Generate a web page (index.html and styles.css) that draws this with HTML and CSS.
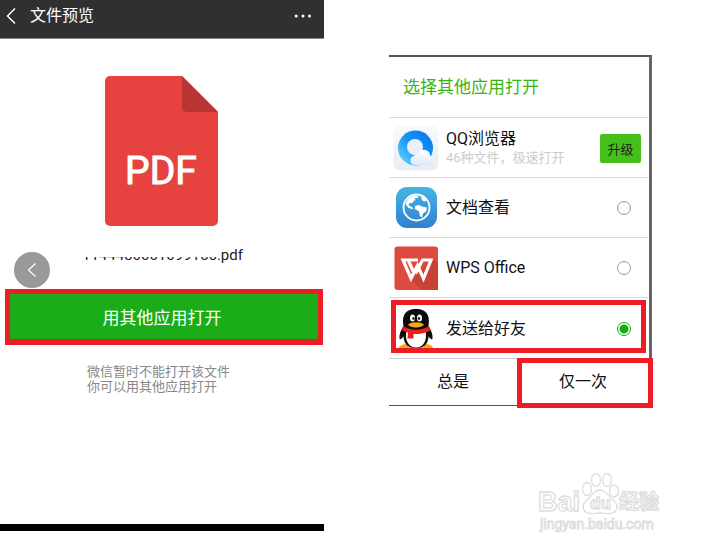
FILE: index.html
```
<!DOCTYPE html>
<html lang="zh-CN">
<head>
<meta charset="utf-8">
<title>文件预览</title>
<link rel="stylesheet" href="styles.css">
</head>
<body>
<main class="page">
  <section class="phone">
    <header class="bar">
      <button class="icon-btn" type="button" aria-label="返回">
        <svg width="10" height="18" viewBox="0 0 10 18" fill="none" stroke="#fff" stroke-width="1.500"><path d="M9 1.500 1.500 9 9 16.500"/></svg>
      </button>
      <h1 class="bar-title">文件预览</h1>
      <button class="icon-btn" type="button" aria-label="更多">
        <svg width="18" height="4" viewBox="0 0 18 4" fill="#fff"><circle cx="2.200" cy="2" r="1.500"/><circle cx="9" cy="2" r="1.500"/><circle cx="15.500" cy="2" r="1.500"/></svg>
      </button>
    </header>
    <svg class="pdf" width="114" height="150" viewBox="0 0 114 150" role="img" aria-label="PDF">
      <path fill="#e64340" d="M5 0H77L113 36V145a5 5 0 0 1-5 5H5a5 5 0 0 1-5-5V5a5 5 0 0 1 5-5z"/>
      <path fill="#b83533" d="M77 0V31a5 5 0 0 0 5 5H113z"/>
      <text class="pdf-text" x="56" y="108" text-anchor="middle">PDF</text>
    </svg>
    <div class="name-row">
      <button class="float-back" type="button" aria-label="后退">
        <svg width="10" height="16" viewBox="0 0 10 16" fill="none" stroke="#fff" stroke-width="1.200"><path d="M8.500 1.500 1.500 8l7 6.500"/></svg>
      </button>
      <p class="file-name"><span class="digits">1144430001099156</span>.pdf</p>
    </div>
    <div class="marked">
      <button class="open-btn" type="button">用其他应用打开</button>
    </div>
    <p class="hint">微信暂时不能打开该文件<br>你可以用其他应用打开</p>
    <div class="nav-strip"></div>
  </section>

  <section class="side">
    <form class="dialog">
      <div class="sheet">
        <h2 class="sheet-title">选择其他应用打开</h2>
        <div class="row">
          <svg class="app" width="46" height="46" viewBox="0 0 46 46" aria-hidden="true">
            <defs>
              <linearGradient id="tile" x2="0" y2="1"><stop stop-color="#f7fafd"/><stop offset="1" stop-color="#e7edf4"/></linearGradient>
              <linearGradient id="ring" x1="1" y1="0" x2="0" y2="1"><stop stop-color="#0870ee"/><stop offset=".5" stop-color="#1397f7"/><stop offset="1" stop-color="#75dcfb"/></linearGradient>
              <linearGradient id="cloud" x2="0" y2="1"><stop stop-color="#fff"/><stop offset="1" stop-color="#dce9f5"/></linearGradient>
            </defs>
            <rect x=".5" y=".5" width="45" height="45" rx="7" fill="url(#tile)"/>
            <circle cx="22.500" cy="23" r="17.500" fill="url(#ring)"/>
            <circle cx="22" cy="22" r="8" fill="#e9f0f7"/>
            <path fill="url(#cloud)" d="M22 40a4.500 4.500 0 0 1-1-8.900 4 4 0 0 1 4-2.600 6.500 6.500 0 0 1 12.300 2.500 4.600 4.600 0 0 1-.8 9z"/>
          </svg>
          <div class="label">
            <span class="name">QQ浏览器</span>
            <span class="sub">46种文件，极速打开</span>
          </div>
          <button class="upgrade" type="button">升级</button>
        </div>
        <label class="row">
          <svg class="app" width="46" height="46" viewBox="0 0 46 46" aria-hidden="true">
            <defs><linearGradient id="sky" x2="0" y2="1"><stop stop-color="#43b5e8"/><stop offset="1" stop-color="#3180cf"/></linearGradient></defs>
            <rect x="3" y="2" width="41" height="41" rx="11" fill="url(#sky)"/>
            <circle cx="23.500" cy="22.500" r="13" fill="none" stroke="#fff" stroke-width="1.800"/>
            <path fill="#fff" d="M12.500 19c1-4 4-7 9-8.500l4 .5-1 2-3 0 1 2-2 1-1 2-3 0-1 2 3 2 2 1-1 1-4-1zM28 11.500l4 2 2 2-3 1-2-1.500zM22 21l4-1 3 1.500 5 1-1 4-3 2-1 4-2-1.500-1-4.500-4-2.500z"/>
          </svg>
          <span class="label name">文档查看</span>
          <input class="radio" type="radio" name="app">
        </label>
        <label class="row">
          <svg class="app" width="46" height="46" viewBox="0 0 46 46" aria-hidden="true">
            <rect x="1.500" y="1.500" width="43.500" height="43.500" rx="3" fill="#dd4b3e"/>
            <path fill="#c84236" d="m39.500 13 5.500 6v26H28l-9-10z"/>
            <g fill="none" stroke="#fff" stroke-width="3.200" stroke-linejoin="miter">
              <path d="M25 15H10L18 33.500 24.500 20.500 30.500 33.500 38 15H29.500L22.500 28.500"/>
              <path d="M15.500 16 21 28"/>
            </g>
          </svg>
          <span class="label name">WPS Office</span>
          <input class="radio" type="radio" name="app">
        </label>
        <label class="row picked">
          <svg class="app" width="46" height="46" viewBox="0 0 46 46" aria-hidden="true">
            <ellipse cx="14" cy="42" rx="8" ry="4" fill="#f5a90f"/><ellipse cx="32" cy="42" rx="8" ry="4" fill="#f5a90f"/>
            <path fill="#0b0b0d" d="M10.500 20C8 5 17 3 23 3s15 2 12.500 17c3 5 4.500 9 4 12.500-.5 2-2.500 0-4-2C35 39 30 42 23 42s-12-3-12.500-11.500c-1.500 2-3.500 4-4 2-.5-3.500 1-7.500 4-12.500z"/>
            <path fill="#fff" d="M13.500 25h19c2 9-2 16.500-9.500 16.500S11.500 34 13.500 25z"/>
            <ellipse cx="19.500" cy="12" rx="2.500" ry="3.500" fill="#fff"/><ellipse cx="26.500" cy="12" rx="2.500" ry="3.500" fill="#fff"/>
            <circle cx="20.500" cy="12.500" r="1.200"/><circle cx="26" cy="12.500" r="1.200"/>
            <path fill="#f8a90c" d="M15 18.500c4-3 12-3 16 0-2 4-14 4-16 0z"/>
            <path fill="#e8211e" d="M10 20c8 5 18 5 26 0l1.500 4.500c-6 3-12 4-17 3.500v4.500h-6l.5-6-6-2z"/>
          </svg>
          <span class="label name">发送给好友</span>
          <input class="radio" type="radio" name="app" checked>
        </label>
      </div>
      <div class="actions">
        <button class="action" type="button">总是</button>
        <button class="action once" type="button">仅一次</button>
      </div>
    </form>
    <svg class="watermark" width="128" height="66" viewBox="0 0 128 66" role="img" aria-label="Baidu 经验">
      <g fill="#fff" stroke="#dedede" stroke-width="1.300">
        <ellipse cx="50" cy="18" rx="4.500" ry="6.500"/><ellipse cx="59" cy="9" rx="4.500" ry="6.500"/><ellipse cx="70" cy="9" rx="4.500" ry="6.500"/><ellipse cx="77" cy="20" rx="4.500" ry="6"/>
        <path d="M63 19c6 0 8 6 12 9s6 7 4 11-7 4-16 3c-9 1-14 1-16-3s0-8 4-11 6-9 12-9z"/>
        <text class="wm-logo" x="1" y="40">Bai</text>
        <text class="wm-du" x="53" y="38">du</text>
        <text class="wm-cjk" x="82" y="38">经验</text>
        <text class="wm-url" x="3" y="58">jingyan.baidu.com</text>
      </g>
    </svg>
  </section>
</main>
</body>
</html>
```

FILE: styles.css
```
* { box-sizing: border-box; }
body {
  margin: 0;
  background: #fff;
  color: #111;
  font-family: Roboto, "Noto Sans CJK SC", sans-serif;
}
h1, h2, p { margin: 0; font-weight: 400; }
button {
  margin: 0;
  padding: 0;
  border: 0;
  background: none;
  color: inherit;
  font: inherit;
}
svg { display: block; flex: none; }

.page {
  display: grid;
  grid-template-columns: 324fr 377fr;
  align-items: start;
}

/* File preview */
.phone { display: flex; flex-direction: column; }
.bar {
  display: flex;
  align-items: center;
  height: 39px;
  padding: 0 12px 6px 6px;
  background: #303030;
  border-bottom: 1px solid #888;
  color: #fff;
}
.bar-title { flex: 1; margin-left: 14px; font-size: 16px; line-height: 24px; }
.pdf { margin: 37px auto 0 105px; }
.pdf-text {
  fill: #fff;
  stroke: #fff;
  stroke-width: 1px;
  font-family: Roboto, sans-serif;
  font-size: 39px;
}
.name-row {
  display: flex;
  align-items: flex-start;
  gap: 32px;
  padding: 19px 0 0 14px;
}
.float-back {
  display: grid;
  place-items: center;
  width: 36px;
  height: 36px;
  margin-top: 7px;
  border-radius: 50%;
  background: #999;
}
.file-name { font-size: 15px; line-height: 20px; color: #222; }
/* Upper part of the number is hidden */
.digits {
  display: inline-block;
  clip-path: inset(12px 0 0 0);
}
.marked {
  margin: 1px 1px 0 5px;
  border: 5px solid #ee1c25;
}
.open-btn {
  display: block;
  width: 100%;
  height: 46px;
  padding-right: 4px;
  background: #1aad19;
  border-bottom: 1px solid #128a12;
  color: #fff;
  font-size: 17px;
}
.hint {
  margin: 19px 0 0 87px;
  color: #888;
  font-size: 13px;
  line-height: 15px;
}
.nav-strip { height: 7px; margin-top: 130px; background: #000; }

/* App chooser */
.side {
  display: flex;
  flex-direction: column;
  padding: 55px 48px 0 65px;
}
.sheet {
  margin-right: 1px;
  border-top: 2px solid #555;
  border-right: 3px solid #666;
}
.sheet-title {
  height: 60px;
  padding-left: 14px;
  color: #38b416;
  font-size: 17px;
  line-height: 60px;
}
.row {
  position: relative;
  display: flex;
  align-items: center;
  height: 60px;
  padding: 1px 18px 0 4px;
  border-top: 1px solid #d9d9d9;
}
.label {
  display: flex;
  flex: 1;
  flex-direction: column;
  margin-left: 7px;
}
.name { font-size: 16px; line-height: 20px; }
.sub { color: #ccc; font-size: 13px; line-height: 18px; }
.upgrade {
  width: 41px;
  height: 29px;
  margin-right: -10px;
  border-radius: 2px;
  background: #45c01a;
  color: #222;
  font-size: 13px;
}
.radio {
  appearance: none;
  width: 14px;
  height: 14px;
  margin: 0;
  border: 1px solid #999;
  border-radius: 50%;
}
.radio:checked {
  border-color: #12b010;
  background: radial-gradient(circle, #12b010 4px, transparent 5px);
}
.picked { height: 61px; }
.picked::after {
  content: "";
  position: absolute;
  inset: 2px 3px 5px 2px;
  border: 5px solid #ee1c25;
}
.actions {
  display: grid;
  grid-template-columns: 1fr 136px;
  align-items: start;
}
.action {
  height: 48px;
  padding-bottom: 4px;
  border-top: 1px solid #ccc;
  border-bottom: 1px solid #555;
  font-size: 16px;
}
.once {
  height: 50px;
  padding: 0 4px 6px 0;
  border: 5px solid #ee1c25;
}
.watermark { align-self: flex-end; margin: 63px -12px 0 0; }
.wm-logo { font: bold 27px "Liberation Sans", sans-serif; }
.wm-du { font: bold 17px "Liberation Sans", sans-serif; }
.wm-cjk { font: bold 20px "Noto Sans CJK SC", sans-serif; }
.wm-url { font: 14px Roboto, sans-serif; stroke-width: 1px; }
```
